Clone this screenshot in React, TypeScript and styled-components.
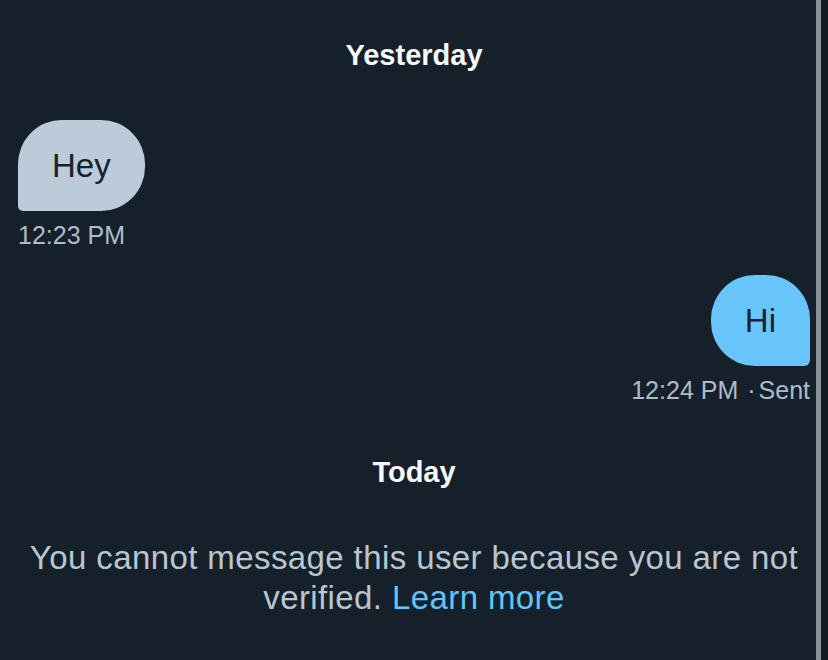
import React from "react";
import styled, { createGlobalStyle } from "styled-components";

const Global = createGlobalStyle`
  html, body { margin: 0; padding: 0; background: #15202b; }
  body { font-family: "Liberation Sans", Arial, sans-serif; }
  #root { height: 660px; }
`;

const Page = styled.div`
  display: flex;
  width: 828px;
  height: 660px;
  background: #15202b;
  overflow: hidden;
`;

const Chat = styled.div`
  flex: 1;
  display: flex;
  flex-direction: column;
  padding: 38px 6px 0 18px;
`;

const ScrollTrack = styled.div`
  width: 12px;
  display: flex;
  background: #141c26;
`;

const Thumb = styled.div`
  width: 5px;
  height: 100%;
  background: #8a9097;
`;

const DayLabel = styled.div<{ $mt: number }>`
  margin-top: ${(p) => p.$mt}px;
  text-align: center;
  color: #f7f9f9;
  font-weight: 700;
  font-size: 29px;
  line-height: 35px;
`;

const Group = styled.div<{ $mine?: boolean; $mt: number }>`
  display: flex;
  flex-direction: column;
  align-items: ${(p) => (p.$mine ? "flex-end" : "flex-start")};
  margin-top: ${(p) => p.$mt}px;
`;

const Bubble = styled.div<{ $mine?: boolean }>`
  height: 91px;
  display: flex;
  align-items: center;
  padding: 0 34px;
  font-size: 33px;
  color: #16212c;
  background: ${(p) => (p.$mine ? "#68c5fb" : "#bccbd9")};
  border-radius: ${(p) => (p.$mine ? "44px 44px 6px 44px" : "44px 44px 44px 5px")};
`;

const Meta = styled.div`
  margin-top: 9px;
  font-size: 25px;
  line-height: 30px;
  color: #aebcc8;
`;

const Dot = styled.span`
  margin: 0 3px 0 9px;
`;

const Notice = styled.p`
  margin: 48px 0 0;
  text-align: center;
  font-size: 33px;
  letter-spacing: 0.4px;
  line-height: 40px;
  color: #b8c6d1;
`;

const Link = styled.a`
  color: #62c4f8;
  text-decoration: none;
`;

export default function App() {
  return (
    <>
      <Global />
      <Page>
        <Chat>
          <DayLabel $mt={0}>Yesterday</DayLabel>
          <Group $mt={47}>
            <Bubble>Hey</Bubble>
            <Meta>12:23 PM</Meta>
          </Group>
          <Group $mine $mt={25}>
            <Bubble $mine>Hi</Bubble>
            <Meta>
              12:24 PM<Dot>·</Dot>Sent
            </Meta>
          </Group>
          <DayLabel $mt={50}>Today</DayLabel>
          <Notice>
            You cannot message this user because you are not verified.{" "}
            <Link href="#">Learn more</Link>
          </Notice>
        </Chat>
        <ScrollTrack>
          <Thumb />
        </ScrollTrack>
      </Page>
    </>
  );
}
